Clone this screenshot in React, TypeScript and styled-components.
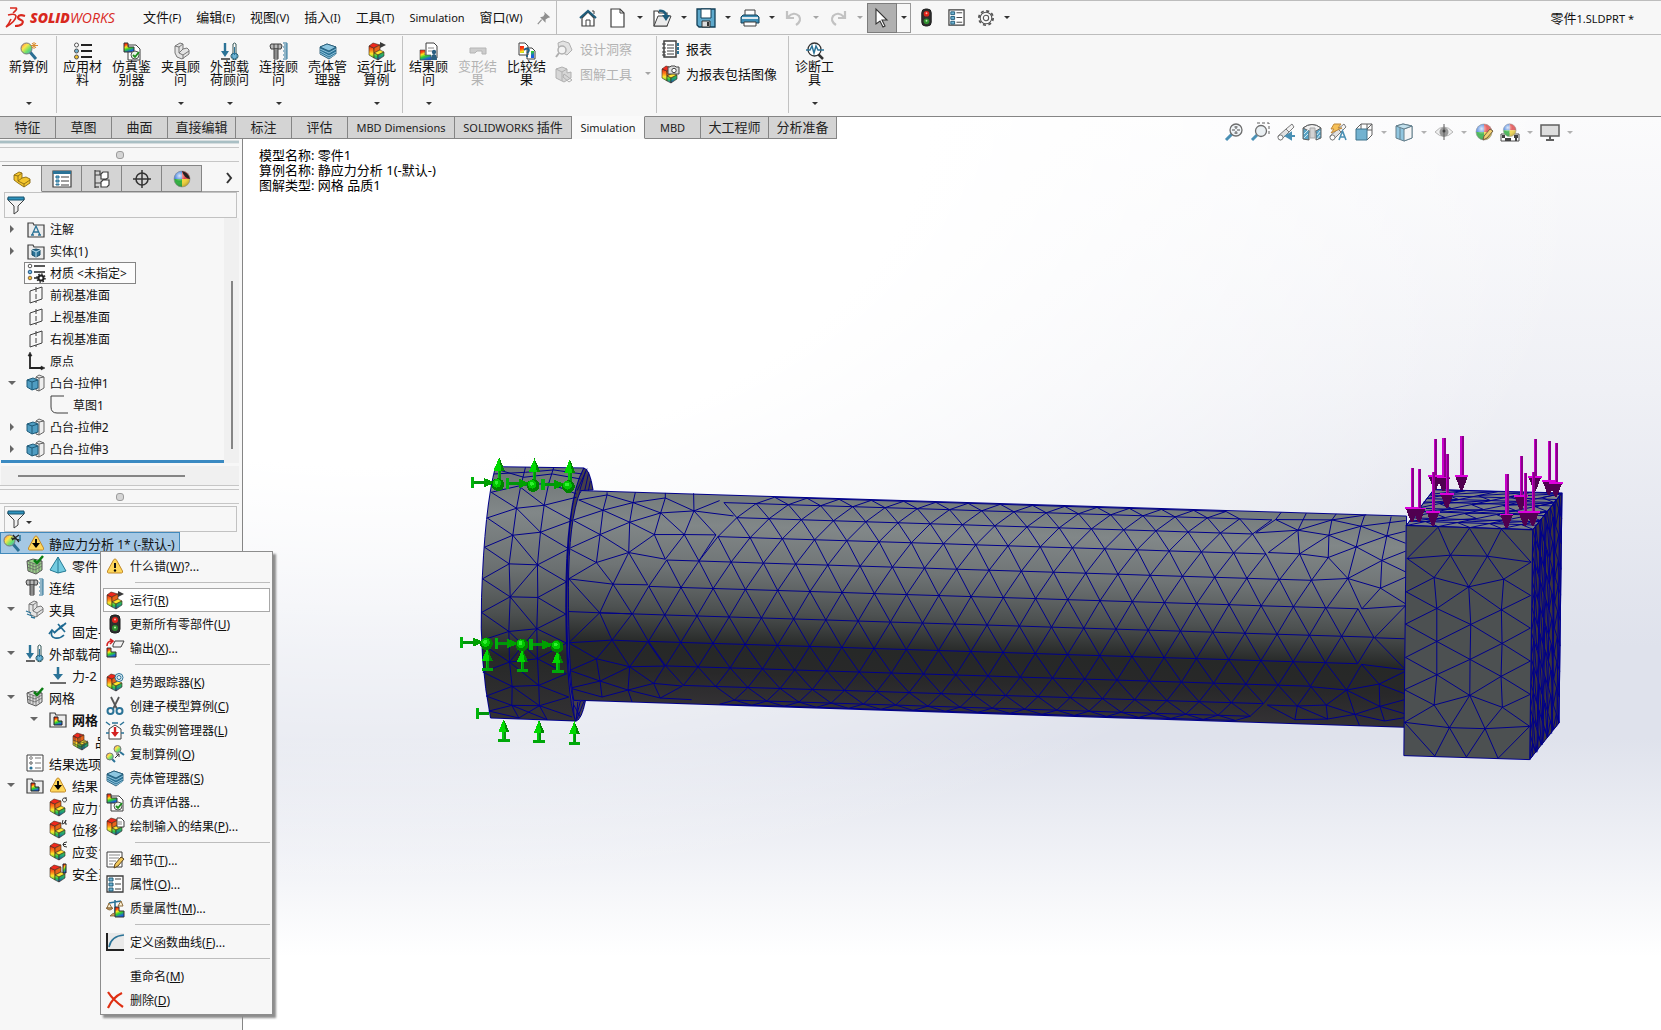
import React from "react";
import styled, { createGlobalStyle, css } from "styled-components";

const GlobalStyle = createGlobalStyle`
  * { box-sizing: border-box; }
  html, body, #root { height: 100%; margin: 0; }
  body {
    overflow: hidden;
    background: #f7f7f7;
    color: #111;
    font-family: "Noto Sans", "Noto Sans CJK SC", sans-serif;
    font-size: 12px;
  }
  button {
    font: inherit;
    color: inherit;
    background: none;
    border: 0;
    padding: 0;
    margin: 0;
  }
  ul { list-style: none; margin: 0; padding: 0; }
`;

/* ---------- icons ---------- */

const INK = "#3f3f3f";
const BLUE = "#2b7397";
const SKY = "#6fb4d4";

const plotBlock = (
  <g stroke="#3a2a1a" strokeWidth="0.6" strokeLinejoin="round">
    <path d="M1 4l5 2v10l-5-3z" fill="url(#heatLeft)" />
    <path d="M1 4l4-3 7 2-6 3z" fill="#f0281c" />
    <path d="M6 6l6-3v5l-6 3z" fill="#e8641a" />
    <path d="M6 11l6-3 4 2-6 3z" fill="#ffe52e" />
    <path d="M6 11l4 2v5l-4-2z" fill="url(#heatFront)" />
    <path d="M10 13l6-3v4l-6 4z" fill="url(#heatRight)" />
  </g>
);
const clamp = (
  <g fill="#e4e4e4" stroke="#777" strokeWidth="1">
    <path d="M3 4l5-3 3 1v5l4-1 2 2v4l-7 5-5-2-2-4z" />
    <path d="M3 4l4 1v6l4 2 6-4M7 5l4-3M11 13v4M7 11l4-4" fill="none" />
  </g>
);
const bolt = (
  <g>
    <path d="M1 2h10l1 2-1 3H1L0 4z" fill="#b9b9b9" stroke={INK} />
    <path d="M4 7h4v10H4z" fill="#ddd" stroke={INK} />
    <path d="M4 9h4M4 11h4M4 13h4M4 15h4M4 2v5M8 2v5" stroke={INK} />
    <path d="M17 1v16M13 1h4M14 3h3M13 5h4M14 7h3M13 9h4M14 11h3M13 13h4M14 15h3M13 17h4" stroke={BLUE} fill="none" />
  </g>
);
const loads = (
  <g>
    <path d="M4 1v9" stroke={BLUE} strokeWidth="2.4" />
    <path d="M0 9h8l-4 6z" fill={BLUE} />
    <path d="M0 17h9" stroke={INK} strokeWidth="1.6" />
    <path d="M12 2q1.500-2 3 0v9a3.500 3.500 0 1 1-3 0z" fill="#fff" stroke="#355" />
    <circle cx="13.500" cy="14" r="2.800" fill={SKY} stroke={BLUE} />
    <path d="M13.500 5v8" stroke={BLUE} />
  </g>
);
const layers = (
  <g stroke="#1d526d" strokeWidth="0.8">
    <path d="M1 5v7l9 5 7-5V5L8 2z" fill="#2b7397" />
    <path d="M1 5l7-3 9 3-7 4z" fill="#8cc6e0" />
    <path d="M1 7l9 4 7-4M1 9l9 5 7-4M1 11l9 5 7-4" stroke="#a8d5ea" fill="none" />
  </g>
);
const boxes = (
  <g>
    <path d="M9 3l3-2 5 2v11l-5 3-3-1z" fill="#eee" stroke="#666" />
    <path d="M12 17V4l-3-1M12 4l5-1" stroke="#666" fill="none" />
    <path d="M0 6l6-2 5 2v8l-6 2-5-3z" fill="#4f9dc2" stroke="#1e5a78" />
    <path d="M0 6l5 2v8M5 8l6-2" fill="none" stroke="#1e5a78" />
  </g>
);
const folder = <path d="M1 3h5l1 2h10v12H1z" fill="#ececec" stroke={INK} strokeWidth="1.200" />;
const miniPlot = <path d="M1 1h4v4h6v5H1z" fill="url(#rainbow)" stroke="#333" />;
const warnShape = (
  <path d="M9 2q1 0 1.500 1l6 11q.5 2-1 2h-13q-1.500 0-1-2l6-11q.5-1 1.500-1z" fill="#ffd75a" stroke="#c28a2a" />
);
const warn = (
  <g>
    {warnShape}
    <path d="M9 6v5" stroke="#111" strokeWidth="2" />
    <circle cx="9" cy="13.500" r="1.200" />
  </g>
);
const warnDown = (
  <g>
    {warnShape}
    <path d="M9 5v5" stroke="#111" strokeWidth="2" />
    <path d="M5 9h8l-4 5z" />
  </g>
);
const listPanel = (
  <g>
    <path d="M1 1h16v16H1z" fill="#fff" stroke={INK} strokeWidth="1.300" />
    <path d="M3 3h4v3H3zM3 8h4v3H3zM3 13h4v3H3z" fill={SKY} stroke="#215a77" />
    <path d="M9 4h6M9 9h6M9 14h6" stroke={INK} />
  </g>
);
const lensColor = (
  <g>
    <path d="M10 10l6 7" stroke="#2b6f94" strokeWidth="3" />
    <circle cx="6.500" cy="6.500" r="5.500" fill="url(#lens)" stroke="#777" />
  </g>
);
const plane = (
  <g fill="none" stroke={INK}>
    <path d="M3 5l12-4v12L3 17z" />
    <path d="M9 1v16" strokeDasharray="5 2" />
  </g>
);
const check = <path d="M8 4l3 3 6-7" fill="none" stroke="#0a7d12" strokeWidth="2.500" />;
const meshCube = (tint: string) => (
  <g>
    <path d="M1 5l6-2 9 2v9l-6 4-8-3z" fill={tint} stroke="#555" />
    <path d="M1 8l8 3 7-4M1 11l8 3 7-4M4 6v9M7 7v9M10 8v9M13 7v8M1 5l8 3 7-3" stroke="#666" fill="none" strokeWidth="0.800" />
  </g>
);
const ball = (
  <g>
    <path d="M9 9V1A8 8 0 0 0 1 9z" fill="#3f7fe0" />
    <path d="M9 9V1a8 8 0 0 1 8 8z" fill="#e34b4b" />
    <path d="M9 9H1a8 8 0 0 0 8 8z" fill="#2fae3f" />
    <path d="M9 9h8a8 8 0 0 1-8 8z" fill="#f3d43b" />
    <circle cx="9" cy="9" r="8" fill="url(#gloss)" stroke="#888" strokeWidth="0.600" />
  </g>
);
const pencil = <path d="M8 17l1-4 6-7 3 2-6 7z" fill="#f2c85b" stroke="#5a4320" />;
const lens = (
  <g>
    <path d="M7 11l-6 6" stroke="#2b7ea8" strokeWidth="3" />
    <circle cx="11" cy="7" r="6" fill="#eef3f6" stroke="#555" strokeWidth="1.300" />
  </g>
);
const scope = (
  <g fill="#ddd" stroke="#666">
    <path d="M1 13l8-7 3 3-8 8q-3 0-3-4z" />
    <path d="M9 6l6-5 2 3-5 5z" fill="#f1f1f1" />
    <circle cx="3.500" cy="14.500" r="2.500" fill="#fff" />
  </g>
);

const ICONS: Record<string, React.ReactNode> = {
  newStudy: (
    <g>
      {lensColor}
      <path d="M14 0v7M11 3.500h7M12 1l4 5M16 1l-4 5" stroke="#d98a2b" />
    </g>
  ),
  study: (
    <g>
      {lensColor}
      <path d="M10 1l6 7M9 6l7-5M8 4l9 2" stroke="#222" strokeWidth="1.200" />
      <path d="M17 1v6" stroke={BLUE} strokeWidth="1.500" />
    </g>
  ),
  material: (
    <g>
      <path d="M7 3h11M7 9h11M7 15h11" stroke="#222" strokeWidth="1.800" />
      <circle cx="2.500" cy="3" r="2" fill="#fff" stroke="#555" />
      <circle cx="2.500" cy="9" r="2" fill={SKY} stroke="#555" />
      <circle cx="2.500" cy="15" r="2" fill="#f1c12d" stroke="#555" />
    </g>
  ),
  materialGear: (
    <g>
      <path d="M7 2h11M7 8h11M7 14h4" stroke="#222" strokeWidth="1.600" />
      <circle cx="3" cy="2" r="1.800" fill="#fff" stroke="#555" />
      <circle cx="3" cy="8" r="1.800" fill={SKY} stroke="#258" />
      <circle cx="3" cy="14" r="1.800" fill="#f1c12d" stroke="#864" />
      <circle cx="14" cy="14" r="2.500" fill="none" stroke="#222" strokeWidth="2" />
      <circle cx="14" cy="14" r="4" fill="none" stroke="#222" strokeWidth="1.500" strokeDasharray="1.500 1.600" />
    </g>
  ),
  evaluate: (
    <g>
      <path d="M5 3h8l4 4v11H5z" fill="#fff" stroke={INK} />
      {miniPlot}
      <circle cx="12" cy="13" r="4" fill="#e9f5e6" stroke="#555" />
      <path d="M10 13l2 2 4-5" stroke="#1d8f1d" strokeWidth="1.800" fill="none" />
    </g>
  ),
  clamp,
  clampTree: (
    <g>
      {clamp}
      <path d="M0 11l5 2M1 14l5 2M5 17l4 1" stroke={BLUE} strokeWidth="1.300" />
    </g>
  ),
  loads,
  bolt,
  layers,
  run: (
    <g>
      {plotBlock}
      <path d="M12 0l6 3-6 3z" fill="#3a3a3a" />
    </g>
  ),
  plot: plotBlock,
  resultAdvisor: (
    <g>
      <path d="M6 1h8l3 3v12H6z" fill="#fff" stroke={INK} />
      <path d="M8 6h6M8 9h4" stroke="#888" />
      <path d="M0 8h5v5h6v5H0z" fill="url(#rainbow)" stroke="#444" strokeWidth="0.600" />
      <circle cx="14" cy="10" r="2.200" fill="#2b5f80" />
      <path d="M11 18q0-6 3-6t3 6z" fill="#2b5f80" />
    </g>
  ),
  deformed: <path d="M1 6h16v6h-4V9H8l-2 2H1z" fill="#cdcdcd" stroke="#b5b5b5" />,
  compare: (
    <g>
      <path d="M1 1h6l3 3v9H1zM9 6h5l3 3v8H9z" fill="#fff" stroke={INK} />
      <path d="M2 4h4v7H2zM13 9h3v7h-3z" fill="url(#rainbow)" />
      <path d="M6 8q3-3 5 0 0 2-2 3M9 13v2" stroke="#1b5f87" strokeWidth="1.800" fill="none" />
    </g>
  ),
  insight: (
    <g stroke="#b0b0b0" fill="#e2e2e2">
      <path d="M3 3l5-2 6 2 3 7-5 5-8-4z" />
      <circle cx="7" cy="10" r="4" fill="#f3f3f3" strokeWidth="1.500" />
      <path d="M4 13l-3 4" strokeWidth="2" />
    </g>
  ),
  plotTools: (
    <g stroke="#b0b0b0" fill="#d6d6d6">
      <path d="M1 4l6-2 5 2v4l4-1v6l-7 4-8-4z" />
      <path d="M9 9l8 6-3 2-6-5zM1 4l6 3v9M7 7l5-3" fill="none" />
    </g>
  ),
  report: (
    <g>
      <path d="M3 1h12v16H3z" fill="#fff" stroke={INK} strokeWidth="1.500" />
      <path d="M6 5h7M6 8h7M6 11h7M6 14h7" stroke={INK} />
      <path d="M1 4h4M1 8h4M1 12h4M1 15h4" stroke={INK} />
      <path d="M16 3h2v3h-2zM16 7h2v3h-2zM16 11h2v3h-2z" fill={BLUE} />
    </g>
  ),
  reportImage: (
    <g>
      {plotBlock}
      <path d="M7 2h2l1-1h4l1 1h3v7H7z" fill="#ddd" stroke="#444" />
      <circle cx="13" cy="5.500" r="2.200" fill="#fff" stroke="#444" />
    </g>
  ),
  diagnose: (
    <g>
      <path d="M12 12l5 5" stroke="#333" strokeWidth="2.500" />
      <circle cx="8.500" cy="7.500" r="6.500" fill="#fff" stroke="#333" strokeWidth="1.300" />
      <path d="M0 8h4l2-4 2 7 2-7 2 4h6" fill="none" stroke={BLUE} strokeWidth="1.500" />
    </g>
  ),
  home: (
    <g>
      <path d="M3 9l6-6 6 6v8H3z" fill="#fff" stroke={INK} strokeWidth="1.200" />
      <path d="M1 9l8-7 8 7" fill="none" stroke="#1e5d7c" strokeWidth="2.200" />
      <path d="M7 17v-6h4v6M13 2h2v3" fill="none" stroke={INK} />
    </g>
  ),
  doc: (
    <g>
      <path d="M2 0h9l4 4v14H2z" fill="#fff" stroke={INK} strokeWidth="1.200" />
      <path d="M11 0v4h4" fill="none" stroke={INK} />
    </g>
  ),
  open: (
    <g>
      <path d="M1 2h4l1 2h8v13H1z" fill="#fff" stroke={INK} strokeWidth="1.200" />
      <path d="M1 17l4-10h13l-4 10z" fill="#ececec" stroke={INK} />
      <path d="M6 2q6-1 7 5" stroke="#1e5d7c" strokeWidth="2.500" fill="none" />
      <path d="M9 6h8l-4 6z" fill="#1e5d7c" />
    </g>
  ),
  save: (
    <g>
      <path d="M0 0h18v18H2l-2-2z" fill="#5ea9cc" stroke="#123f57" strokeWidth="1.300" />
      <path d="M4 0h10v9H4z" fill="#fff" stroke="#123f57" />
      <path d="M5 12h8v6H5z" fill="#ddd" stroke="#333" />
      <path d="M10 13h2v4h-2z" fill="#333" />
    </g>
  ),
  print: (
    <g>
      <path d="M4 1h10v7H4z" fill="#fff" stroke={INK} />
      <path d="M0 8l2-2h14l2 2v6H0z" fill="#3d8db4" stroke="#16445c" />
      <path d="M1 8h16v2H1z" fill="#dfeaf0" />
      <path d="M3 13h12v4H3z" fill="#fff" stroke={INK} />
    </g>
  ),
  undo: <path d="M2 2v7h7M3 8q6-6 11-1 3 5-3 9" fill="none" stroke="#c2c2c2" strokeWidth="2.200" />,
  redo: <path d="M16 2v7H9M15 8Q9 2 4 7q-3 5 3 9" fill="none" stroke="#c2c2c2" strokeWidth="2.200" />,
  cursor: <path d="M3 0v15l4-3 3 6 2-1-3-6h5z" fill="#fff" stroke="#333" strokeWidth="1.100" />,
  traffic: (
    <g>
      <rect x="4" y="0" width="10" height="18" rx="4" fill="#2f2f2f" stroke="#1c1c1c" />
      <circle cx="9" cy="5" r="3" fill="#e0241b" />
      <circle cx="9" cy="13" r="3" fill="#2f8f2f" />
      <circle cx="9" cy="4.500" r="1" fill="#ffb3a8" />
      <circle cx="9" cy="12.500" r="1" fill="#bdf0b0" />
    </g>
  ),
  listPanel,
  gear: (
    <g fill="none" stroke="#555">
      <circle cx="9" cy="9" r="8" strokeWidth="2" strokeDasharray="3.400 2.880" />
      <circle cx="9" cy="9" r="6.500" fill="#fafafa" strokeWidth="1.200" />
      <circle cx="9" cy="9" r="3" strokeWidth="1.200" />
    </g>
  ),
  pin: (
    <g fill="#8f8f8f">
      <path d="M9 1l8 7-3 1-3 2v4l-7-7 4-1 2-3z" />
      <path d="M6 11l-5 6" stroke="#8f8f8f" strokeWidth="1.500" />
    </g>
  ),
  part: (
    <g fill="#f4c62d" stroke="#8a6a12" strokeWidth="0.900">
      <path d="M1 5l5-3 3 1v5l4-1 4 2v4l-6 4-6-4-4-3z" />
      <path d="M1 5l4 1v5l6 3 6-4M5 6l4-3M11 14v3M5 11l4-3" fill="none" />
    </g>
  ),
  propertyTab: (
    <g>
      <path d="M0 1h18v16H0z" fill="#fff" stroke={INK} strokeWidth="1.200" />
      <path d="M0 1h18v3H0z" fill={BLUE} />
      <path d="M3 6h3v2H3zM3 10h3v2H3zM3 14h3v1H3z" fill={SKY} stroke={BLUE} />
      <path d="M8 7h8M8 11h8M8 15h8" stroke={INK} />
    </g>
  ),
  configTab: (
    <g fill="#fff" stroke={INK} strokeWidth="1.200">
      <path d="M2 0v18M2 1h5v4H2M2 13h6M2 5h6" fill="none" />
      <path d="M8 4l2-2h5v6l-2 1H8zM8 12l2-2h6v5l-2 2H8z" />
      <path d="M2 17h4" />
    </g>
  ),
  target: (
    <g fill="none" stroke="#333" strokeWidth="1.500">
      <circle cx="9" cy="9" r="6" />
      <path d="M9 0v18M0 9h18" />
    </g>
  ),
  appearance: (
    <g>
      {ball}
      <path d="M9 1q6 1 8 8-6-1-8-8z" fill="#222" />
    </g>
  ),
  filter: (
    <g>
      <path d="M1 2h16v2l-6 6v5l-4 3v-8L1 4z" fill="#f2f2f2" stroke={INK} />
      <path d="M1 1h16v3H1z" fill="#2f93bd" stroke="#16536f" />
    </g>
  ),
  annotation: (
    <g>
      {folder}
      <path d="M5 15l4-9 4 9M6 12h6M4 15h3M11 15h3" stroke={BLUE} strokeWidth="1.300" fill="none" />
    </g>
  ),
  bodies: (
    <g>
      {folder}
      <path d="M5 8l4-1 4 1v5l-4 2-4-2z" fill={BLUE} stroke="#164a64" />
      <path d="M5 8l4 2 4-2M9 10v5" stroke="#bfe0ee" fill="none" />
    </g>
  ),
  plane,
  origin: (
    <g fill="none" stroke="#222" strokeWidth="1.800">
      <path d="M3 2v14h13" />
      <path d="M1 4l2-4 2 4zM14 14l4 2-4 2z" fill="#222" strokeWidth="0.500" />
    </g>
  ),
  boss: boxes,
  sketch: <path d="M14 0H1v11q0 6 6 6h11" fill="none" stroke={INK} />,
  meshPart: (
    <g>
      {meshCube("#9bd08a")}
      {check}
    </g>
  ),
  tetra: <path d="M9 1l8 14-8 2-8-3zM9 1v16" fill="#73cbe0" stroke="#247a94" />,
  anchor: (
    <g fill="none" stroke="#1f6a92" strokeWidth="1.700">
      <path d="M3 9q-2 6 3 7t9-3M5 11l9-8" />
      <path d="M9 2l7 8M17 1l-7 6M0 12l3-4 3 3" />
    </g>
  ),
  force: (
    <g>
      <path d="M9 1v8" stroke={BLUE} strokeWidth="2.500" />
      <path d="M4 8h10l-5 6z" fill={BLUE} />
      <path d="M1 17h16" stroke={INK} strokeWidth="1.500" />
    </g>
  ),
  mesh: (
    <g>
      {meshCube("#ddd")}
      {check}
    </g>
  ),
  plotFolder: (
    <g>
      {folder}
      <path d="M5 7h4v4h4v4H5z" fill="url(#rainbow)" stroke="#222" />
    </g>
  ),
  meshPlot: (
    <g>
      {plotBlock}
      <path d="M3 4v10M8 2v15M12 9v7M1 8l8 3 7-2M1 11l8 4 7-4" stroke="#333" strokeWidth="0.600" fill="none" />
    </g>
  ),
  options: (
    <g>
      <path d="M1 1h16v16H1z" fill="#fff" stroke={INK} />
      <path d="M9 4h6M9 9h6M9 14h6" stroke="#777" />
      <circle cx="5" cy="4" r="1.300" fill="#fff" stroke="#777" />
      <circle cx="5" cy="9" r="1.300" fill="#bbb" stroke="#777" />
      <circle cx="5" cy="14" r="1.600" fill={BLUE} />
    </g>
  ),
  stress: (
    <g>
      {plotBlock}
      <path d="M18 0h-3a2 2 0 1 0 1 0" fill="none" stroke="#333" />
    </g>
  ),
  displacement: (
    <g>
      {plotBlock}
      <path d="M14 0l-1 4q2 1 4-4l-1 4h2" fill="none" stroke="#333" />
    </g>
  ),
  strain: (
    <g>
      {plotBlock}
      <path d="M18 0q-4 0-4 2.500T18 5M14 2.500h3" fill="none" stroke="#333" />
    </g>
  ),
  safety: (
    <g>
      {plotBlock}
      <path d="M14 0h3v9h-3z" fill="url(#rainbow)" stroke="#222" />
    </g>
  ),
  warn,
  warnDown,
  exportPlot: (
    <g>
      <path d="M1 9h4v4h5v5H1z" fill="url(#rainbow)" stroke="#333" />
      <path d="M1 7q0-5 5-5M4 0l3 2-3 3" fill="none" stroke="#d42121" strokeWidth="1.600" />
      <path d="M7 6l2-4h9l-3 6H7z" fill="#f2f2f2" stroke={INK} />
    </g>
  ),
  trend: (
    <g>
      {plotBlock}
      <circle cx="13" cy="4.500" r="4" fill="#e6f1f7" stroke={BLUE} />
      <circle cx="13" cy="4.500" r="2" fill="none" stroke={BLUE} />
    </g>
  ),
  scissors: (
    <g fill="none">
      <path d="M5 0l6 12M13 0L7 12" stroke="#555" strokeWidth="1.800" />
      <circle cx="4.500" cy="14" r="3" stroke={BLUE} strokeWidth="2" />
      <circle cx="13.500" cy="14" r="3" stroke={BLUE} strokeWidth="2" />
    </g>
  ),
  loadCases: (
    <g>
      <path d="M3 8l6-4 6 4v10H3z" fill="#fff" stroke={INK} />
      <path d="M9 6v7" stroke="#d42121" strokeWidth="2.400" />
      <path d="M5 11h8l-4 5z" fill="#d42121" />
      <path d="M0 1l4 3M18 1l-4 3M0 12h3M18 12h-3M6 2h6" stroke={BLUE} strokeWidth="1.500" />
    </g>
  ),
  copyStudy: (
    <g>
      <path d="M14 7l4 3M6 14l3 3" stroke={BLUE} strokeWidth="2" />
      <circle cx="11.500" cy="4" r="3.500" fill="url(#lens)" stroke="#777" />
      <circle cx="3.800" cy="11.500" r="3.500" fill="url(#lens)" stroke="#777" />
      <path d="M9 13l4-4M10 9h3v3" stroke="#333" fill="none" />
    </g>
  ),
  importPlot: (
    <g>
      {plotBlock}
      <path d="M11 1h4l3 3v6h-7z" fill="#fff" stroke={INK} />
      <path d="M12 5h4M12 7h4" stroke="#888" />
    </g>
  ),
  details: (
    <g>
      <path d="M1 1h15v15H1z" fill="#fff" stroke={INK} />
      <path d="M3 4h11M3 7h10M3 10h7M3 13h4" stroke="#888" />
      {pencil}
    </g>
  ),
  mass: (
    <g>
      <path d="M9 1v13M3 4l12-2" stroke={BLUE} strokeWidth="1.600" />
      <path d="M3 4l-2 5h5zM15 2l-3 5h5z" fill="#fff3d6" stroke="#8a6a3a" />
      <path d="M0 9h7q-3 4-7 0zM4 17q5-6 9 0z" fill="#c9a066" stroke="#704f20" strokeWidth="0.700" />
      <path d="M9 8h4v4h5v6H9z" fill="url(#rainbow)" stroke="#333" />
    </g>
  ),
  curve: (
    <g>
      <path d="M2 0h16v16H2z" fill="#e9e9e9" />
      <path d="M1 0v17h17" fill="none" stroke="#222" strokeWidth="2" />
      <path d="M3 14Q5 3 18 2" fill="none" stroke={BLUE} strokeWidth="1.600" />
    </g>
  ),
  remove: <path d="M2 1q5 8 15 15M16 2Q7 6 2 17" fill="none" stroke="#df2f12" strokeWidth="2.200" />,
  zoomFit: (
    <g>
      {lens}
      <path d="M11 3v3M11 8v3M7 7h3M12 7h3" stroke="#333" />
      <path d="M9 4h4M9 10h4" stroke="#333" strokeWidth="0.600" />
    </g>
  ),
  zoomArea: (
    <g>
      <path d="M6 0h12v12" fill="none" stroke="#444" strokeDasharray="3 2" />
      <path d="M6 12l-5 5" stroke="#2b7ea8" strokeWidth="3" />
      <circle cx="10" cy="8" r="5.500" fill="#e8eef2" stroke="#555" strokeWidth="1.300" />
    </g>
  ),
  prevView: (
    <g>
      {scope}
      <path d="M18 13h-5M14 10v6l-5-3z" stroke="#2b7ea8" strokeWidth="2" fill="#2b7ea8" />
    </g>
  ),
  section: (
    <g stroke="#444">
      <path d="M0 5q9-7 18 0v10l-5 2V9H6v8l-6-1z" fill="#3e95bd" />
      <path d="M0 5q9-7 18 0l-5 3H6z" fill="#eee" />
      <path d="M7 5h5v10H7z" fill="#ccc" stroke="#999" />
      <path d="M1 11l4-4M1 15l4-4M14 12l3-4M14 16l3-4" stroke="#cfe7f1" />
    </g>
  ),
  dynamicView: (
    <g>
      {scope}
      <path d="M5 1h7l-3 4h4L2 10l3-4H2z" fill="#f6b73c" stroke="#b3741a" />
      <path d="M10 17l3.500-9 3.500 9M11.500 14h4" stroke="#2b7ea8" strokeWidth="1.600" fill="none" />
    </g>
  ),
  orientation: (
    <g>
      <path d="M1 6l5-5h11v11l-5 5" fill="#fff" stroke="#444" />
      <path d="M12 6l5-5M6 1v16M17 7H1M12 1v6" stroke="#444" fill="none" />
      <path d="M1 6h11v11H1z" fill="#5ba6c9" stroke="#1e5a78" />
    </g>
  ),
  display: (
    <g stroke="#4a6a7a">
      <path d="M1 3l7-2 9 2v12l-8 3-8-3z" fill="#7fbddb" />
      <path d="M9 6l8-3v12l-8 3z" fill="#f5f5f5" />
      <path d="M1 3l8 3 8-3-9-2z" fill="#b9dceb" />
      <path d="M5 5v11" fill="none" />
    </g>
  ),
  eye: (
    <g>
      <path d="M0 9q9-10 18 0-9 9-18 0z" fill="#eee" stroke="#aaa" />
      <circle cx="9" cy="9" r="4.500" fill="#888" />
      <path d="M9 1v16" stroke="#444" />
      <circle cx="9" cy="8" r="1.500" fill="#222" />
    </g>
  ),
  editAppearance: (
    <g>
      {ball}
      {pencil}
    </g>
  ),
  scene: (
    <g>
      <path d="M0 11h18v7H0z" fill="#fff" stroke="#333" />
      <path d="M1 12h3v3H1zM7 15h3v3H7zM13 12h4v3h-4zM4 15h3v3H4zM14 15h2v3h-2z" fill="#222" />
      <g transform="translate(1.500 0) scale(.8)">{ball}</g>
    </g>
  ),
  monitor: (
    <g>
      <path d="M0 2h18v11H0z" fill="#d9d9d9" stroke="#444" strokeWidth="1.500" />
      <path d="M9 13v4M5 17h8" stroke="#444" strokeWidth="2" />
    </g>
  ),
};

const Svg = styled.svg`
  flex: none;
  display: block;
  overflow: visible;
`;
const Icon = ({ name, size = 18 }: { name: string; size?: number }) => (
  <Svg width={size} height={size} viewBox="0 0 18 18" aria-hidden="true">
    {ICONS[name]}
  </Svg>
);

const Caret = styled.span<{ $dim?: boolean }>`
  flex: none;
  width: 0;
  height: 0;
  border: 3px solid transparent;
  border-top-color: ${(p) => (p.$dim ? "#a5a5a5" : "#333")};
  border-bottom-width: 0;
`;

const HiddenSvg = styled.svg`
  position: absolute;
`;
const SharedDefs = () => (
  <HiddenSvg width="0" height="0" aria-hidden="true">
    <defs>
      <linearGradient id="rainbow" x1="0" y1="0" x2="0.4" y2="1">
        <stop offset="0" stopColor="#f01a10" />
        <stop offset="0.250" stopColor="#ff4a10" />
        <stop offset="0.450" stopColor="#ffe520" />
        <stop offset="0.700" stopColor="#2fd02f" />
        <stop offset="1" stopColor="#1a5fe0" />
      </linearGradient>
      <linearGradient id="heatLeft" x1="0" y1="0" x2="0" y2="1">
        <stop offset="0" stopColor="#f0201a" />
        <stop offset="0.400" stopColor="#ff8a1a" />
        <stop offset="0.650" stopColor="#ffe82e" />
        <stop offset="1" stopColor="#3fd03a" />
      </linearGradient>
      <linearGradient id="heatFront" x1="0" y1="0" x2="0" y2="1">
        <stop offset="0" stopColor="#b6e62e" />
        <stop offset="0.500" stopColor="#2fc24a" />
        <stop offset="1" stopColor="#1f6fd8" />
      </linearGradient>
      <linearGradient id="heatRight" x1="0" y1="0" x2="0" y2="1">
        <stop offset="0" stopColor="#43c93a" />
        <stop offset="0.500" stopColor="#1f9f7a" />
        <stop offset="1" stopColor="#1847b8" />
      </linearGradient>
      <linearGradient id="lens" x1="0" y1="0" x2="1" y2="1">
        <stop offset="0" stopColor="#ff6b4c" />
        <stop offset="0.350" stopColor="#ffe54a" />
        <stop offset="0.650" stopColor="#6be06b" />
        <stop offset="1" stopColor="#3aa5e0" />
      </linearGradient>
      <radialGradient id="gloss" cx="0.35" cy="0.3" r="0.7">
        <stop offset="0" stopColor="#fff" stopOpacity="0.8" />
        <stop offset="0.500" stopColor="#fff" stopOpacity="0" />
        <stop offset="1" stopColor="#000" stopOpacity="0.2" />
      </radialGradient>
    </defs>
  </HiddenSvg>
);

/* ---------- frame ---------- */

const Shell = styled.div`
  display: flex;
  flex-direction: column;
  height: 100vh;
  min-width: 1100px;
`;

const TitleBar = styled.header`
  display: flex;
  align-items: center;
  height: 35px;
  flex: none;
  border-top: 1px solid #bdbdbd;
  border-bottom: 1px solid #bdbdbd;
`;
const Brand = styled.div`
  display: flex;
  align-items: center;
  gap: 5px;
  width: 143px;
  padding-left: 5px;
  color: #d9281e;
  font: italic 14px/20px "Open Sans", "Noto Sans", sans-serif;
  b { font-weight: 800; }
`;
const MenuBar = styled.nav`
  display: flex;
  align-items: center;
  gap: 15px;
  padding-right: 5px;
`;
const MenuButton = styled.button`
  font-size: 13px;
  line-height: 20px;
  white-space: nowrap;
  small { font-size: 11px; }
`;
const LatinMenuButton = styled(MenuButton)`
  font-size: 11px;
`;
const QuickTools = styled.div`
  display: flex;
  align-items: center;
  height: 100%;
  padding-left: 20px;
  border-left: 1px solid #bdbdbd;
  > button:first-child { margin-right: 8px; }
`;
const QuickButton = styled.button<{ $wide?: boolean; $on?: boolean }>`
  display: flex;
  align-items: center;
  justify-content: center;
  width: ${(p) => (p.$wide ? 30 : 22)}px;
  height: 30px;
  ${(p) =>
    p.$on &&
    css`
      width: 30px;
      margin-left: -4px;
      background: #b0b0b0;
      border: 1px solid #7d7d7d;
    `}
`;
const QuickCaret = styled.button<{ $boxed?: boolean; $slim?: boolean }>`
  display: flex;
  align-items: center;
  justify-content: center;
  width: ${(p) => (p.$slim ? 12 : 22)}px;
  height: 30px;
  ${(p) =>
    p.$boxed &&
    css`
      width: 14px;
      border: 1px solid #9a9a9a;
      border-left: 0;
    `}
`;
const FileName = styled.div`
  margin-left: auto;
  padding-right: 27px;
  font-size: 13px;
  white-space: nowrap;
  small { font-size: 11px; }
`;

const Ribbon = styled.section`
  display: flex;
  flex: none;
  height: 82px;
  padding: 1px 0 3px;
  border-bottom: 1px solid #858585;
`;
const RibbonGroup = styled.div<{ $width: number; $column?: boolean }>`
  display: flex;
  flex: none;
  flex-direction: ${(p) => (p.$column ? "column" : "row")};
  width: ${(p) => p.$width}px;
  padding-left: 1px;
`;
const Divided = styled(RibbonGroup)`
  border-right: 1px solid #c2c2c2;
`;
const RibbonButton = styled.button<{ $wide?: boolean }>`
  display: flex;
  flex-direction: column;
  align-items: center;
  width: ${(p) => (p.$wide ? 57 : 49)}px;
  height: 76px;
  padding: 6px 4px 7px;
  font-size: 13px;
  line-height: 13px;
  &:disabled { color: #b3b3b3; }
`;
const RibbonLabel = styled.span`
  flex: 1;
  width: 39px;
`;
const RibbonRow = styled.button`
  display: flex;
  align-items: center;
  gap: 7px;
  height: 25px;
  padding: 0 5px 0 3px;
  font-size: 13px;
  white-space: nowrap;
  &:disabled { color: #b3b3b3; }
  > span:last-child:not(:nth-child(2)) { margin-left: auto; }
`;

const TabStrip = styled.div`
  display: flex;
  flex: none;
  height: 23px;
  margin-top: -1px;
`;
const Tab = styled.button<{ $width: number; $on?: boolean }>`
  width: ${(p) => p.$width}px;
  height: 23px;
  border: 1px solid #858585;
  border-left: 0;
  background: #d4d4d4;
  color: #222;
  font-size: 13px;
  line-height: 19px;
  white-space: nowrap;
  ${(p) =>
    p.$on &&
    css`
      background: #fafafa;
      border-top-color: #fafafa;
      border-bottom-color: #fafafa;
    `}
  span { font-size: 11px; }
  span > span { font-size: 13px; }
`;

/* ---------- side panel ---------- */

const Work = styled.div`
  display: flex;
  flex: 1;
  min-height: 0;
`;
const Side = styled.aside`
  display: flex;
  flex-direction: column;
  flex: none;
  width: 243px;
  border-right: 1px solid #858585;
  background: #f7f7f7;
`;
const TealLine = styled.div`
  flex: none;
  height: 4px;
  margin: 1px 3px 3px 0;
  background: #a9bfc4;
  border-top: 1px solid #d5dddf;
  border-bottom: 1px solid #d5dddf;
`;
const Grip = styled.div`
  display: flex;
  flex: none;
  align-items: center;
  justify-content: center;
  height: 15px;
  margin-right: 3px;
  border-top: 1px solid #c6c6c6;
  border-bottom: 1px solid #c6c6c6;
  &::after {
    content: "";
    width: 6px;
    height: 6px;
    border-radius: 3px;
    border: 1px solid #9c9c9c;
    background: #d5d5d5;
  }
`;
const PanelTabs = styled.div`
  display: flex;
  align-items: stretch;
  height: 27px;
  margin-top: 3px;
  padding-left: 2px;
  flex: none;
`;
const PanelTab = styled.button<{ $on?: boolean }>`
  display: flex;
  align-items: center;
  justify-content: center;
  width: 40px;
  border: 1px solid #858585;
  border-left: 0;
  background: ${(p) => (p.$on ? "#f7f7f7" : "#d4d4d4")};
  border-bottom-color: ${(p) => (p.$on ? "#f7f7f7" : "#858585")};
`;
const MoreTabs = styled.button`
  flex: 1;
  display: flex;
  align-items: center;
  justify-content: center;
  margin-right: 3px;
  padding-left: 16px;
  border-bottom: 1px solid #a5a5a5;
`;
const FilterBox = styled.label<{ $gap?: number }>`
  display: flex;
  flex: none;
  align-items: center;
  gap: 1px;
  height: 26px;
  margin: ${(p) => p.$gap ?? 0}px 5px 0 4px;
  padding-left: 2px;
  border: 1px solid #c2c2c2;
  > span { margin-top: 6px; }
  input {
    flex: 1;
    min-width: 0;
    border: 0;
    outline: 0;
    background: none;
    font: inherit;
  }
`;
const UpperTree = styled.div`
  display: flex;
  flex: none;
  margin: 0 3px 0 1px;
  > ul { flex: 1; height: 245px; border-bottom: 3px solid #3a8ac2; }
`;
const VTrack = styled.div`
  width: 15px;
  padding: 63px 0 0 7px;
  background: #f0f0f0;
  &::after {
    content: "";
    display: block;
    width: 2px;
    height: 168px;
    background: #858585;
  }
`;
const HTrack = styled.div`
  flex: none;
  height: 19px;
  margin: 3px 3px 0 1px;
  padding: 9px 0 0 17px;
  background: #f0f0f0;
  &::after {
    content: "";
    display: block;
    width: 167px;
    height: 2px;
    background: #858585;
  }
`;
const SplitLine = styled.div`
  flex: none;
  height: 4px;
  margin-right: 3px;
  border-top: 1px solid #c6c6c6;
`;
const Row = styled.li<{ $depth?: number }>`
  display: flex;
  align-items: center;
  height: 22px;
  padding-left: ${(p) => 26 + (p.$depth ?? 0) * 23}px;
  position: relative;
  white-space: nowrap;
`;
const Node = styled.button<{ $boxed?: boolean; $bold?: boolean }>`
  display: flex;
  align-items: center;
  gap: 5px;
  height: 22px;
  font-weight: ${(p) => (p.$bold ? 700 : 400)};
  ${(p) =>
    p.$boxed &&
    css`
      margin-left: -3px;
      padding: 0 8px 0 2px;
      border: 1px solid #858585;
      background: #fcfcfc;
    `}
`;
const Twist = styled.span<{ $open?: boolean; $depth?: number }>`
  position: absolute;
  left: ${(p) => 7 + (p.$depth ?? 0) * 23}px;
  border: 4px solid transparent;
  ${(p) =>
    p.$open
      ? css`border-top-color: #666; border-bottom-width: 0;`
      : css`left: 9px; border-left-color: #666; border-right-width: 0;`}
`;
const LowerTree = styled.div`
  position: relative;
  flex: 1;
  min-height: 0;
  font-size: 13px;
`;
const StudyNode = styled.button`
  display: flex;
  align-items: center;
  gap: 4px;
  height: 22px;
  width: 180px;
  padding-left: 2px;
  border: 1px solid #4189bb;
  background: #a5c8e4;
  white-space: nowrap;
  svg:first-child { margin-right: 2px; }
  small { font-size: 12px; }
`;

type NodeSpec = {
  icons: string[];
  text: string;
  depth?: number;
  twist?: "open" | "shut";
  boxed?: boolean;
  bold?: boolean;
};

const TreeRow = ({ icons, text, depth = 0, twist, boxed, bold }: NodeSpec) => (
  <Row $depth={depth}>
    {twist && <Twist $open={twist === "open"} $depth={depth} />}
    <Node $boxed={boxed} $bold={bold}>
      {icons.map((i) => (
        <Icon key={i} name={i} />
      ))}
      {text}
    </Node>
  </Row>
);

const FEATURES: NodeSpec[] = [
  { icons: ["annotation"], text: "注解", twist: "shut" },
  { icons: ["bodies"], text: "实体(1)", twist: "shut" },
  { icons: ["materialGear"], text: "材质 <未指定>", boxed: true },
  { icons: ["plane"], text: "前视基准面" },
  { icons: ["plane"], text: "上视基准面" },
  { icons: ["plane"], text: "右视基准面" },
  { icons: ["origin"], text: "原点" },
  { icons: ["boss"], text: "凸台-拉伸1", twist: "open" },
  { icons: ["sketch"], text: "草图1", depth: 1 },
  { icons: ["boss"], text: "凸台-拉伸2", twist: "shut" },
  { icons: ["boss"], text: "凸台-拉伸3", twist: "shut" },
];

const STUDY: NodeSpec[] = [
  { icons: ["meshPart", "tetra"], text: "零件1" },
  { icons: ["bolt"], text: "连结" },
  { icons: ["clampTree"], text: "夹具", twist: "open" },
  { icons: ["anchor"], text: "固定-1", depth: 1 },
  { icons: ["loads"], text: "外部载荷", twist: "open" },
  { icons: ["force"], text: "力-2 (", depth: 1 },
  { icons: ["mesh"], text: "网格", twist: "open" },
  { icons: ["plotFolder"], text: "网格", depth: 1, twist: "open", bold: true },
  { icons: ["meshPlot"], text: "品质1", depth: 2 },
  { icons: ["options"], text: "结果选项" },
  { icons: ["plotFolder", "warnDown"], text: "结果", twist: "open" },
  { icons: ["stress"], text: "应力1", depth: 1 },
  { icons: ["displacement"], text: "位移1", depth: 1 },
  { icons: ["strain"], text: "应变1", depth: 1 },
  { icons: ["safety"], text: "安全系数", depth: 1 },
];

/* ---------- context menu ---------- */

const ContextMenu = styled.div`
  position: absolute;
  z-index: 5;
  left: 100px;
  top: 19px;
  width: 173px;
  padding: 2px;
  border: 1px solid #8d8d8d;
  background: #f7f7f7;
  box-shadow: 3px 3px 2px #8d8d8d;
  font-size: 12px;
`;
const MenuItem = styled.button<{ $hot?: boolean }>`
  display: flex;
  align-items: center;
  gap: 6px;
  width: 100%;
  height: 24px;
  padding-left: 2px;
  border: 1px solid ${(p) => (p.$hot ? "#a8a8a8" : "transparent")};
  background: ${(p) => (p.$hot ? "#fff" : "none")};
  white-space: nowrap;
  text-align: left;
`;
const Blank = styled.span`
  width: 18px;
  flex: none;
`;
const Rule = styled.hr`
  height: 1px;
  margin: 4px 0 5px 32px;
  border: 0;
  background: #bdbdbd;
`;

type MenuSpec = [icon: string, text: string, key?: string, tail?: string] | null;
const MENU: MenuSpec[] = [
  ["warn", "什么错", "W", "?..."],
  null,
  ["run", "运行", "R"],
  ["traffic", "更新所有零部件", "U"],
  ["exportPlot", "输出", "X", "..."],
  null,
  ["trend", "趋势跟踪器", "K"],
  ["scissors", "创建子模型算例", "C"],
  ["loadCases", "负载实例管理器", "L"],
  ["copyStudy", "复制算例", "O"],
  ["layers", "壳体管理器", "S"],
  ["evaluate", "仿真评估器", undefined, "..."],
  ["importPlot", "绘制输入的结果", "P", "..."],
  null,
  ["details", "细节", "T", "..."],
  ["listPanel", "属性", "O", "..."],
  ["mass", "质量属性", "M", "..."],
  null,
  ["curve", "定义函数曲线", "F", "..."],
  null,
  ["", "重命名", "M"],
  ["remove", "删除", "D"],
];

/* ---------- model view ---------- */

const View = styled.main`
  position: relative;
  flex: 1;
  min-width: 0;
  > svg { display: block; width: 100%; height: 100%; }
`;
const Stage = styled.div`
  display: flex;
  flex-direction: column;
  flex: 1;
  min-height: 0;
  background:
    radial-gradient(ellipse 75% 85% at 22% 0%, #fff 45%, rgba(255, 255, 255, 0) 100%),
    linear-gradient(to bottom, #fbfbfc 0%, #eff0f5 30%, #dfe2ec 58%, #dfe2ec 68%, #fff 92%);
`;
const Caption = styled.div`
  position: absolute;
  left: 16px;
  top: 9px;
  color: #000;
  font-size: 13px;
  line-height: 15px;
`;
const HeadsUp = styled.div`
  display: flex;
  align-items: center;
  margin-left: auto;
  padding-right: 84px;
  height: 32px;
  opacity: 0.85;
`;
const HudButton = styled.button`
  display: flex;
  align-items: center;
  justify-content: center;
  width: 26px;
  height: 24px;
`;
const HudCaret = styled.button`
  display: flex;
  align-items: center;
  justify-content: center;
  width: 14px;
  height: 24px;
`;

type P = [number, number];
const pts = (list: P[]) => list.map((p) => p.join(",")).join(" ");
const chain = (list: P[]) => "M" + list.map((p) => p.join(" ")).join("L");

/* Regular part of the shaft mesh: staggered rows of nodes along the axis. */
const PITCH = 32.27;
const SLOPE = 0.0315;
const SHAFT_ROWS = [
  { y: 499, phase: 871.3, from: 745, to: 1250 },
  { y: 506, phase: 885, from: 710, to: 1278 },
  { y: 520.7, phase: 865.7, from: 730, to: 1262 },
  { y: 540.3, phase: 879, from: 712, to: 1272 },
  { y: 565.3, phase: 860, from: 662, to: 1316 },
  { y: 592.3, phase: 874.3, from: 640, to: 1364 },
  { y: 620.3, phase: 858, from: 598, to: 1378 },
  { y: 647.3, phase: 874, from: 640, to: 1364 },
  { y: 671.3, phase: 859, from: 662, to: 1315 },
  { y: 690.3, phase: 876.7, from: 680, to: 1270 },
  { y: 703.3, phase: 863.3, from: 730, to: 1262 },
  { y: 708, phase: 880.7, from: 712, to: 1245 },
];
const rowNodes = (r: (typeof SHAFT_ROWS)[number]): P[] => {
  const out: P[] = [];
  const first = Math.ceil((r.from - r.phase) / PITCH);
  for (let k = first; r.phase + k * PITCH <= r.to; k++) {
    const x = r.phase + k * PITCH;
    out.push([Math.round(x * 10) / 10, Math.round((r.y + (x - 850) * SLOPE) * 10) / 10]);
  }
  return out;
};
const shaftMesh = () => {
  const rows = SHAFT_ROWS.map(rowNodes);
  let d = "";
  rows.forEach((row, i) => {
    d += chain(row);
    (rows[i + 1] ?? []).forEach((b) =>
      row.forEach((a) => {
        if (Math.abs(a[0] - b[0]) < 27) d += chain([a, b]);
      })
    );
  });
  return d;
};

const LEFT_END: P[][] = [
  [[500, 155], [500, 163], [488, 209], [479, 282], [468, 366], [518, 431], [478, 517], [515, 599], [468, 655], [479, 722], [485, 770]],
  [[585, 155], [578, 186], [568, 245], [565, 336]],
  [[675, 157], [675, 172], [661, 217], [642, 282], [675, 356]],
  [[760, 158], [761, 211], [732, 282], [675, 356]],
  [[415, 178], [500, 163], [578, 186], [675, 172], [761, 211], [838, 180]],
  [[415, 178], [488, 209], [578, 186], [661, 217], [761, 211], [880, 226]],
  [[400, 238], [488, 209], [568, 245], [661, 217], [732, 282], [827, 283]],
  [[400, 240], [479, 282], [568, 245], [642, 282], [732, 282]],
  [[390, 322], [479, 282], [565, 336], [642, 282]],
  [[390, 326], [468, 366], [565, 336], [675, 356]],
  [[518, 431], [565, 336], [622, 433]],
  [[468, 366], [385, 415], [518, 431], [622, 433]],
  [[385, 415], [478, 517], [575, 520], [515, 599], [622, 604]],
  [[518, 431], [575, 520]],
  [[380, 513], [478, 517], [385, 607], [515, 599]],
  [[385, 607], [468, 655], [568, 679], [673, 677]],
  [[515, 599], [568, 679], [622, 604]],
  [[468, 655], [388, 690], [479, 722], [568, 679], [640, 729], [726, 737]],
  [[568, 679], [563, 749], [575, 785]],
  [[673, 677], [640, 729], [660, 773], [726, 737]],
  [[395, 742], [479, 722], [563, 749], [640, 729]],
  [[395, 745], [485, 770], [563, 749], [660, 773], [754, 778]],
  [[827, 283], [776, 361]],
  [[732, 282], [776, 361]],
  [[761, 211], [827, 283]],
  [[622, 604], [673, 677]],
];
const RIGHT_END: P[][] = [
  [[408, 157], [535, 149], [468, 117], [637, 118], [740, 103]],
  [[560, 98], [535, 149], [540, 220], [446, 216], [535, 149]],
  [[408, 157], [468, 117], [485, 95]],
  [[650, 100], [637, 118], [628, 164], [626, 231], [576, 299]],
  [[735, 105], [724, 137], [710, 199], [685, 294], [727, 385]],
  [[815, 108], [802, 166], [787, 240], [783, 323], [727, 385]],
  [[535, 149], [637, 118], [724, 137], [858, 120]],
  [[535, 149], [628, 164], [724, 137], [802, 166], [858, 152]],
  [[628, 164], [710, 199], [802, 166], [858, 188]],
  [[628, 164], [540, 220], [626, 231], [710, 199], [787, 240], [858, 212]],
  [[858, 274], [787, 240], [685, 294], [626, 231]],
  [[480, 297], [540, 220], [576, 299], [685, 294], [783, 323], [858, 290]],
  [[783, 323], [858, 370]],
  [[685, 294], [622, 382]],
  [[727, 385], [858, 376], [765, 472], [855, 475]],
  [[765, 472], [855, 565]],
  [[726, 552], [855, 568]],
  [[620, 549], [681, 629], [726, 552], [779, 611], [855, 574]],
  [[574, 619], [681, 629], [779, 611], [855, 640]],
  [[779, 611], [781, 678], [795, 722]],
  [[681, 629], [781, 678], [855, 658]],
  [[681, 629], [706, 702], [781, 678], [855, 700]],
  [[681, 629], [620, 674], [574, 619], [533, 677], [477, 616]],
  [[443, 674], [533, 677], [620, 674], [706, 702], [720, 736]],
  [[443, 674], [526, 718], [533, 677], [624, 716], [620, 674]],
  [[526, 718], [624, 716], [706, 702], [795, 722], [855, 712]],
];
const FLANGE: P[][] = [
  [[255, 80], [240, 140], [228, 203], [217, 284], [206, 370], [209, 469], [205, 573], [207, 665], [215, 738], [214, 795], [235, 833]],
  [[340, 80], [325, 128], [311, 194], [300, 275], [291, 373], [292, 471], [289, 565], [291, 655], [295, 735], [297, 796], [320, 838]],
  [[160, 100], [255, 95], [340, 88], [425, 100]],
  [[165, 85], [250, 110], [335, 100], [420, 115]],
  [[152, 155], [240, 135], [325, 128], [408, 160]],
  [[152, 155], [228, 203], [311, 194], [408, 170]],
  [[240, 140], [311, 194], [395, 240]],
  [[140, 232], [228, 203], [300, 275], [395, 240]],
  [[140, 232], [217, 284], [300, 275], [385, 325]],
  [[132, 320], [217, 284], [291, 373], [385, 325]],
  [[132, 320], [206, 370], [291, 373], [378, 424]],
  [[126, 415], [206, 370]],
  [[291, 373], [209, 469], [126, 415]],
  [[123, 516], [209, 469], [292, 471], [378, 424]],
  [[209, 469], [289, 565], [376, 521], [292, 471]],
  [[123, 516], [205, 573], [289, 565], [378, 608]],
  [[123, 600], [205, 573], [291, 655], [378, 608]],
  [[123, 610], [207, 665], [289, 565]],
  [[127, 695], [207, 665], [295, 735], [378, 700]],
  [[207, 665], [291, 655], [378, 700]],
  [[127, 695], [215, 738], [295, 735], [385, 770]],
  [[137, 767], [215, 738], [297, 796], [385, 770]],
  [[137, 767], [214, 795], [297, 796], [395, 830]],
  [[145, 812], [214, 795], [320, 838]],
  [[145, 812], [235, 833], [297, 796]],
];
const BLOCK: P[][] = [
  [[203, 414], [296, 320], [333, 404], [390, 323], [444, 407], [486, 326], [575, 425]],
  [[203, 414], [333, 404], [444, 407], [575, 425]],
  [[203, 414], [284, 471], [333, 404], [388, 499], [444, 407], [493, 476], [575, 425]],
  [[200, 514], [284, 471], [388, 499], [493, 476], [574, 525]],
  [[284, 471], [292, 564], [292, 763], [284, 854]],
  [[493, 476], [486, 568], [488, 669], [485, 768], [489, 861]],
  [[388, 499], [394, 612], [392, 717], [391, 825]],
  [[200, 514], [292, 564], [388, 499], [486, 568], [574, 525]],
  [[198, 611], [292, 564], [394, 612], [486, 568], [573, 623]],
  [[198, 611], [292, 663], [394, 612], [488, 669], [573, 623]],
  [[198, 711], [292, 663], [392, 717], [488, 669], [573, 722]],
  [[198, 711], [292, 763], [392, 717], [485, 768], [573, 722]],
  [[195, 808], [292, 763], [391, 825], [485, 768], [573, 822]],
  [[195, 808], [284, 854], [391, 825], [489, 861], [573, 822]],
  [[195, 906], [284, 854], [330, 922], [391, 825], [437, 925], [489, 861], [571, 918]],
  [[195, 906], [330, 922], [437, 925], [571, 918]],
  [[195, 906], [286, 1007], [330, 922], [381, 1010], [437, 925], [476, 1014], [571, 918]],
];

/* Triangulated parallelogram for the two foreshortened faces of the block. */
const faceMesh = (o: P, u: P, v: P, nu: number, nv: number) => {
  const at = (i: number, j: number): P => {
    const shift = i % 2 ? 0.5 : 0;
    const s = i / nu;
    const t = Math.min(1, Math.max(0, (j - shift) / nv));
    return [Math.round(o[0] + u[0] * s + v[0] * t), Math.round(o[1] + u[1] * s + v[1] * t)];
  };
  let d = "";
  for (let i = 0; i <= nu; i++) {
    const wobble = (j: number) => (i > 0 && i < nu ? (((i * 7 + j * 5) % 5) - 2) * 2 : 0);
    const col: P[] = [];
    for (let j = 0; j <= nv + 1; j++) {
      const p = at(i, j);
      col.push(Math.abs(u[0]) < Math.abs(v[1]) ? [p[0] + wobble(j), p[1]] : [p[0], p[1] + wobble(j)]);
    }
    d += chain(col);
    if (i < nu) {
      for (let j = 0; j <= nv; j++) {
        d += chain([at(i, j), at(i + 1, j)]) + chain([at(i, j), at(i + 1, j + 1)]);
      }
    }
  }
  return d;
};

const FORCES: [number, number, number][] = [
  [288, 55, 208], [314, 52, 212], [368, 46, 208], [324, 100, 262], [219, 142, 303], [240, 145, 305], [282, 154, 315],
  [588, 55, 210], [630, 62, 222], [651, 67, 228], [546, 106, 268], [503, 160, 323], [558, 156, 316], [582, 154, 315],
];
const ForceArrow = ({ x, top, tip }: { x: number; top: number; tip: number }) => (
  <g>
    <path d={`M${x - 5} ${top}h11v${tip - top - 38}h-11z`} fill="#8a008a" />
    <path d={`M${x - 5} ${top}h4v${tip - top - 38}h-4z`} fill="#c800c8" />
    <path d={`M${x - 21} ${tip - 42}h39l-16 42h-7z`} fill="#500050" />
    <path d={`M${x - 21} ${tip - 44}h40v5h-40z`} fill="#dc00dc" />
  </g>
);
const UpArrow = ({ x, tip, base, cap }: { x: number; tip: number; base: number; cap?: boolean }) => (
  <g>
    <path d={`M${x - 5} ${tip + 30}h11V${base}h-11z`} fill="#00960a" />
    <path d={`M${x - 5} ${tip + 30}h5V${base}h-5z`} fill="#00c80a" />
    <path d={`M${x} ${tip}l17 40h-34z`} fill="#00d800" />
    <path d={`M${x} ${tip}l17 40h-10z`} fill="#008a00" />
    {cap && <path d={`M${x - 17} ${base - 4}h35v9h-35z`} fill="#00a80a" />}
  </g>
);
const SideArrow = ({ x, y, to }: { x: number; y: number; to: number }) => (
  <g>
    <path d={`M${x} ${y - 4}H${to}v9H${x}z`} fill="#00960a" />
    <path d={`M${x - 5} ${y - 16}h10v33h-10z`} fill="#00b40a" />
    {to - x > 50 && <path d={`M${x + 34} ${y - 14}l34 14-34 14z`} fill="#00a000" />}
  </g>
);
const Ball = ({ x, y }: { x: number; y: number }) => (
  <g>
    <circle cx={x} cy={y} r="19" fill="#008200" />
    <circle cx={x - 3} cy={y - 4} r="13" fill="#00c800" />
    <circle cx={x - 4} cy={y - 6} r="6" fill="#30f030" />
  </g>
);

const Model = () => (
  <svg viewBox="243 138 1418 892" preserveAspectRatio="xMidYMid meet" role="img" aria-label="零件1">
    <defs>
      <linearGradient id="shaft" gradientUnits="userSpaceOnUse" x1="850" y1="498" x2="843.400" y2="708">
        <stop offset="0" stopColor="#747b7c" />
        <stop offset="0.150" stopColor="#818788" />
        <stop offset="0.350" stopColor="#6f7475" />
        <stop offset="0.550" stopColor="#4d5151" />
        <stop offset="0.720" stopColor="#262827" />
        <stop offset="0.850" stopColor="#282829" />
        <stop offset="1" stopColor="#333134" />
      </linearGradient>
      <linearGradient id="flange" x1="0" y1="0" x2="0" y2="1">
        <stop offset="0" stopColor="#6e7475" />
        <stop offset="0.180" stopColor="#818788" />
        <stop offset="0.400" stopColor="#6b7071" />
        <stop offset="0.580" stopColor="#4b4f4f" />
        <stop offset="0.740" stopColor="#262827" />
        <stop offset="1" stopColor="#333134" />
      </linearGradient>
    </defs>
    <g shapeRendering="crispEdges" strokeLinejoin="round">
      <path d="M581 490L1407 515.500V727L580 700H562V520z" fill="url(#shaft)" stroke="#00008b" />
      <path d={shaftMesh()} fill="none" stroke="#00008b" />
      <g transform="translate(440 440) scale(.33333)" stroke="#00008b" strokeWidth="3">
        <path d={LEFT_END.map(chain).join("")} fill="none" />
        <path d="M430 82Q448 84 458 148L420 150Q385 240 384 440Q384 700 400 780L435 782Q424 838 406 843L390 835Q370 640 374 420Q380 210 408 130z" fill="#453f48" />
        <path d="M436 90l-18 60M445 95l-12 55M450 120l-6 30M440 84l-30 66M405 150Q380 260 379 440Q378 690 398 780L402 840M396 160Q374 360 378 600L388 800M430 785l-22 55M420 782l-14 56M412 785l-4 50M398 790l22 40" fill="none" />
        <path d="M165 78L430 82Q375 180 376 500Q378 760 405 842L150 833Q116 660 123 470Q132 200 165 78z" fill="url(#flange)" />
        <path d={FLANGE.map(chain).join("")} fill="none" />
      </g>
      <g transform="translate(1120 480) scale(.33333)">
        <path d={RIGHT_END.map(chain).join("")} fill="none" stroke="#00008b" strokeWidth="3" />
      </g>
      <g transform="translate(1340 420) scale(.33333)" stroke="#00008b" strokeWidth="3">
        <polygon points={pts([[200, 315], [283, 207], [668, 217], [580, 328]])} fill="#7b8182" />
        <path d={faceMesh([200, 315], [83, -108], [383, 12], 8, 4)} fill="none" />
        <polygon points={pts([[580, 328], [668, 217], [659, 908], [571, 1018]])} fill="#3b353c" />
        <path d={faceMesh([580, 328], [88, -111], [-9, 690], 10, 9)} fill="none" />
        <polygon points={pts([[200, 315], [580, 328], [571, 1018], [193, 1006]])} fill="#4c5051" />
        <path d={BLOCK.map(chain).join("")} fill="none" />
      </g>
      <g transform="translate(1340 420) scale(.33333)">
        {FORCES.map(([x, top, tip]) => (
          <ForceArrow key={`${x}-${tip}`} x={x} top={top} tip={tip} />
        ))}
      </g>
      <g transform="translate(440 440) scale(.33333)">
        {[0, 1, 2].map((i) => (
          <g key={i}>
            <UpArrow x={176 + i * 106} tip={50 + i * 3} base={130} />
            <SideArrow x={96 + i * 106} y={126 + i * 3} to={165 + i * 106} />
            <Ball x={172 + i * 106} y={132 + i * 3} />
            <UpArrow x={140 + i * 106} tip={622 + i * 3} base={688 + i * 3} cap />
            <SideArrow x={62 + i * 105} y={605 + i * 4} to={130 + i * 106} />
            <Ball x={138 + i * 106} y={610 + i * 4} />
            <UpArrow x={190 + i * 106} tip={836 + i * 3} base={900 + i * 4} cap />
          </g>
        ))}
        <SideArrow x={111} y={818} to={145} />
      </g>
    </g>
  </svg>
);

/* ---------- toolbars data ---------- */

const MENUS: [string, string][] = [
  ["文件", "(F)"],
  ["编辑", "(E)"],
  ["视图", "(V)"],
  ["插入", "(I)"],
  ["工具", "(T)"],
  ["Simulation", ""],
  ["窗口", "(W)"],
];
const QUICK: [string, string, boolean?][] = [
  ["doc", "新建"],
  ["open", "打开"],
  ["save", "保存"],
  ["print", "打印"],
  ["undo", "撤消", true],
  ["redo", "重做", true],
];
const ADVISORS: [string, string, boolean][] = [
  ["material", "应用材料", false],
  ["evaluate", "仿真鉴别器", false],
  ["clamp", "夹具顾问", true],
  ["loads", "外部载荷顾问", true],
  ["bolt", "连接顾问", true],
  ["layers", "壳体管理器", false],
  ["run", "运行此算例", true],
];
const TABS: [React.ReactNode, number][] = [
  ["特征", 56],
  ["草图", 56],
  ["曲面", 56],
  ["直接编辑", 68],
  ["标注", 56],
  ["评估", 56],
  [<span>MBD Dimensions</span>, 107],
  [<span>SOLIDWORKS <span>插件</span></span>, 117],
  [<span>Simulation</span>, 73],
  [<span>MBD</span>, 56],
  ["大工程师", 68],
  ["分析准备", 68],
];
const ACTIVE_TAB = 8;
const HUD: [string, boolean][] = [
  ["zoomFit", false],
  ["zoomArea", false],
  ["prevView", false],
  ["section", false],
  ["dynamicView", false],
  ["orientation", true],
  ["display", true],
  ["eye", true],
  ["editAppearance", false],
  ["scene", true],
  ["monitor", true],
];

const Big = ({ icon, text, caret, wide, off }: { icon: string; text: string; caret?: boolean; wide?: boolean; off?: boolean }) => (
  <RibbonButton $wide={wide} disabled={off}>
    <Icon name={icon} />
    <RibbonLabel>{text}</RibbonLabel>
    {caret && <Caret />}
  </RibbonButton>
);

export default function App() {
  return (
    <Shell>
      <GlobalStyle />
      <SharedDefs />
      <TitleBar>
        <Brand>
          <Svg width="20" height="22" viewBox="0 0 20 22" aria-hidden="true">
            <g fill="none" stroke="#d9281e" strokeWidth="1.600">
              <path d="M5 1h6q2 1-3 5" />
              <path d="M3 8q7-2 8 1 0 5-10 11 3-3 5-8" />
              <path d="M20 9q-6-2-7 1 0 2 3 3t1 4q-2 2-7 2" strokeWidth="2.200" />
            </g>
          </Svg>
          <span>
            <b>SOLID</b>WORKS
          </span>
        </Brand>
        <MenuBar>
          {MENUS.map(([t, k]) =>
            k ? (
              <MenuButton key={t}>
                {t}
                <small>{k}</small>
              </MenuButton>
            ) : (
              <LatinMenuButton key={t}>{t}</LatinMenuButton>
            )
          )}
          <button aria-label="固定">
            <Icon name="pin" size={14} />
          </button>
        </MenuBar>
        <QuickTools>
          <QuickButton aria-label="主页">
            <Icon name="home" />
          </QuickButton>
          {QUICK.map(([icon, label, dim]) => (
            <React.Fragment key={icon}>
              <QuickButton aria-label={label}>
                <Icon name={icon} />
              </QuickButton>
              <QuickCaret aria-label={`${label}选项`}>
                <Caret $dim={dim} />
              </QuickCaret>
            </React.Fragment>
          ))}
          <QuickButton $on aria-label="选择">
            <Icon name="cursor" />
          </QuickButton>
          <QuickCaret $boxed aria-label="选择选项">
            <Caret />
          </QuickCaret>
          <QuickButton $wide aria-label="重建">
            <Icon name="traffic" size={17} />
          </QuickButton>
          <QuickButton $wide aria-label="文件属性">
            <Icon name="listPanel" size={17} />
          </QuickButton>
          <QuickButton $wide aria-label="选项">
            <Icon name="gear" size={16} />
          </QuickButton>
          <QuickCaret $slim aria-label="更多选项">
            <Caret />
          </QuickCaret>
        </QuickTools>
        <FileName>
          零件<small>1.SLDPRT *</small>
        </FileName>
      </TitleBar>

      <Ribbon>
        <Divided $width={57}>
          <Big icon="newStudy" text="新算例" caret wide />
        </Divided>
        <Divided $width={346}>
          {ADVISORS.map(([icon, text, caret]) => (
            <Big key={text} icon={icon} text={text} caret={caret} />
          ))}
        </Divided>
        <RibbonGroup $width={148}>
          <Big icon="resultAdvisor" text="结果顾问" caret />
          <Big icon="deformed" text="变形结果" off />
          <Big icon="compare" text="比较结果" />
        </RibbonGroup>
        <Divided $width={106} $column>
          <RibbonRow disabled>
            <Icon name="insight" />
            <span>设计洞察</span>
          </RibbonRow>
          <RibbonRow disabled>
            <Icon name="plotTools" />
            <span>图解工具</span>
            <Caret $dim />
          </RibbonRow>
        </Divided>
        <Divided $width={132} $column>
          <RibbonRow>
            <Icon name="report" />
            <span>报表</span>
          </RibbonRow>
          <RibbonRow>
            <Icon name="reportImage" />
            <span>为报表包括图像</span>
          </RibbonRow>
        </Divided>
        <RibbonGroup $width={52}>
          <Big icon="diagnose" text="诊断工具" caret />
        </RibbonGroup>
      </Ribbon>

      <Stage>
        <TabStrip>
          {TABS.map(([t, w], i) => (
            <Tab key={i} $width={w} $on={i === ACTIVE_TAB}>
              {t}
            </Tab>
          ))}
          <HeadsUp>
            {HUD.map(([icon, caret]) => (
              <React.Fragment key={icon}>
                <HudButton aria-label={icon}>
                  <Icon name={icon} />
                </HudButton>
                {caret && (
                  <HudCaret aria-label={`${icon} 选项`}>
                    <Caret $dim />
                  </HudCaret>
                )}
              </React.Fragment>
            ))}
          </HeadsUp>
        </TabStrip>
        <Work>
          <Side>
            <TealLine />
            <Grip />
            <PanelTabs>
              {["part", "propertyTab", "configTab", "target", "appearance"].map((t, i) => (
                <PanelTab key={t} $on={i === 0} aria-label={t}>
                  <Icon name={t} />
                </PanelTab>
              ))}
              <MoreTabs aria-label="更多">
                <Svg width="8" height="12" viewBox="0 0 8 12">
                  <path d="M2 1l4 5-4 5" fill="none" stroke="#333" strokeWidth="2" />
                </Svg>
              </MoreTabs>
            </PanelTabs>
            <FilterBox>
              <Icon name="filter" />
              <input type="text" aria-label="过滤特征树" />
            </FilterBox>
            <UpperTree>
              <ul>
                {FEATURES.map((f) => (
                  <TreeRow key={f.text} {...f} />
                ))}
              </ul>
              <VTrack />
            </UpperTree>
            <HTrack />
            <SplitLine />
            <Grip />
            <FilterBox $gap={2}>
              <Icon name="filter" />
              <Caret />
              <input type="text" aria-label="过滤算例树" />
            </FilterBox>
            <LowerTree>
              <StudyNode>
                <Icon name="study" />
                <Icon name="warnDown" />
                <span>
                  静应力分析<small> 1* (-</small>默认<small>-)</small>
                </span>
              </StudyNode>
              <ul>
                {STUDY.map((f) => (
                  <TreeRow key={f.icons[0] + f.text} {...f} />
                ))}
              </ul>
              <ContextMenu role="menu">
                {MENU.map((m, i) =>
                  m ? (
                    <MenuItem key={i} role="menuitem" $hot={m[0] === "run"}>
                      {m[0] ? <Icon name={m[0]} /> : <Blank />}
                      <span>
                        {m[1]}
                        {m[2] && (
                          <>
                            (<u>{m[2]}</u>)
                          </>
                        )}
                        {m[3]}
                      </span>
                    </MenuItem>
                  ) : (
                    <Rule key={i} />
                  )
                )}
              </ContextMenu>
            </LowerTree>
          </Side>
          <View>
            <Model />
            <Caption>
              <div>模型名称: 零件1</div>
              <div>算例名称: 静应力分析 1(-默认-)</div>
              <div>图解类型: 网格 品质1</div>
            </Caption>
          </View>
        </Work>
      </Stage>
    </Shell>
  );
}
